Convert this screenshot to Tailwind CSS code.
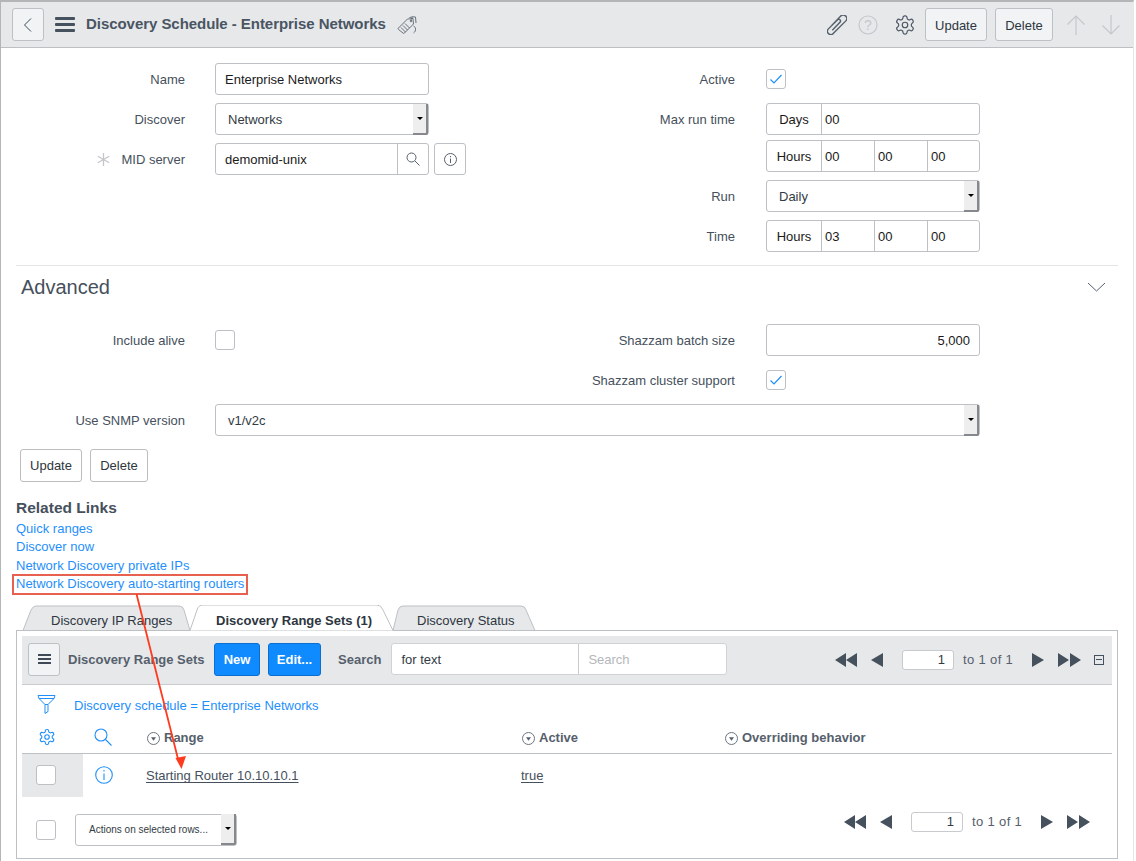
<!DOCTYPE html>
<html>
<head>
<meta charset="utf-8">
<script src="https://cdn.jsdelivr.net/npm/@tailwindcss/browser@4"></script>
</head>
<body class="bg-white">
<div class="relative w-[1136px] h-[861px] overflow-hidden bg-white font-['Liberation_Sans',Arial,sans-serif] text-[13px] text-[#333b44]">
<div class="w-[1134px] h-[861px] border-t-2 border-l border-r border-t-[#b4b5b7] border-l-[#b4b5b7] border-r-[#e6e6e6]">

<!-- header -->
<header class="h-[46px] bg-[#e6e8ea] border-b border-[#bdbfc2] flex items-center pl-[11px] pr-[12px]">
  <button class="w-[32px] h-[33px] rounded-[3px] border border-[#bdc0c4] bg-[#f1f3f5] flex items-center justify-center">
    <svg width="10" height="16" viewBox="0 0 10 16" fill="none" stroke="#3f4a56" stroke-width="1"><path d="M8 1.500 1.500 8 8 14.500"/></svg>
  </button>
  <div class="ml-[11px] w-[20px] flex flex-col gap-[3px]"><span class="block h-[3px] bg-[#46515e] rounded-[1px]"></span><span class="block h-[3px] bg-[#46515e] rounded-[1px]"></span><span class="block h-[3px] bg-[#46515e] rounded-[1px]"></span></div>
  <h1 class="ml-[11px] text-[15px] font-bold text-[#4a5563] whitespace-nowrap tracking-[-0.05px]">Discovery Schedule - Enterprise Networks</h1>
  <svg class="ml-[11px] mt-[3px]" width="20" height="20" viewBox="0 0 20 20" fill="none" stroke="#5a6470" stroke-width="0.900"><path d="M1.500 12 10.500 3l5.500-.5.500 5.500-9 9a1 1 0 0 1-1.500 0L1.500 13.500a1 1 0 0 1 0-1.500Z"/><path d="M4 11.500l4.500 4.500M6 9.500l4.500 4.500M8 7.500l4.500 4.500"/><path d="M12.500 1.500 16 .8l2.500.2.500 6"/><circle cx="14" cy="5" r=".8"/><path d="M14 5c0-2 1-4 1.500-4M16.500 10c2.500 1 3 5 0 7"/></svg>
  <div class="ml-auto flex items-center">
    <svg width="20" height="20" viewBox="2 2 17 17" fill="none" stroke="#56606c" stroke-width="1.200"><path d="M6 11 13.500 3a3 3 0 0 1 4.500 4L7.500 17.500a2.700 2.700 0 0 1-4.500-3.500L11 6a1.500 1.500 0 0 1 2.200 2L6.500 15"/></svg>
    <svg class="ml-[11px]" width="20" height="20" viewBox="0 0 20 20" fill="none" stroke="#c4c8cd" stroke-width="1.200"><circle cx="10" cy="10" r="9"/><text x="10" y="15" text-anchor="middle" font-size="14" fill="#c4c8cd" stroke="none" font-family="Liberation Sans">?</text></svg>
    <svg class="ml-[16px]" width="22" height="22" viewBox="0 0 24 24" fill="none" stroke="#4a5563" stroke-width="1.300"><path d="M12.220 2h-.44a2 2 0 0 0-2 2v.18a2 2 0 0 1-1 1.730l-.43.25a2 2 0 0 1-2 0l-.15-.08a2 2 0 0 0-2.730.73l-.22.38a2 2 0 0 0 .73 2.730l.15.1a2 2 0 0 1 1 1.720v.51a2 2 0 0 1-1 1.740l-.15.09a2 2 0 0 0-.73 2.730l.22.38a2 2 0 0 0 2.730.73l.15-.08a2 2 0 0 1 2 0l.43.25a2 2 0 0 1 1 1.730V20a2 2 0 0 0 2 2h.44a2 2 0 0 0 2-2v-.18a2 2 0 0 1 1-1.730l.43-.25a2 2 0 0 1 2 0l.15.08a2 2 0 0 0 2.730-.73l.22-.39a2 2 0 0 0-.73-2.730l-.15-.08a2 2 0 0 1-1-1.740v-.5a2 2 0 0 1 1-1.740l.15-.09a2 2 0 0 0 .73-2.730l-.22-.38a2 2 0 0 0-2.730-.73l-.15.08a2 2 0 0 1-2 0l-.43-.25a2 2 0 0 1-1-1.730V4a2 2 0 0 0-2-2z"/><circle cx="12" cy="12" r="3"/></svg>
    <button class="ml-[9px] w-[62px] h-[33px] rounded-[3px] border border-[#bdc0c4] bg-[#f1f3f5] text-[#2e3640] text-[13px] pt-[2px]">Update</button>
    <button class="ml-[8px] w-[58px] h-[33px] rounded-[3px] border border-[#bdc0c4] bg-[#f1f3f5] text-[#2e3640] text-[13px] pt-[2px]">Delete</button>
    <svg class="ml-[13px]" width="20" height="22" viewBox="0 0 20 22" fill="none" stroke="#c4c8cd" stroke-width="1.200"><path d="M10 21V2M1.500 10.500 10 2l8.500 8.500"/></svg>
    <svg class="ml-[15px]" width="20" height="22" viewBox="0 0 20 22" fill="none" stroke="#c4c8cd" stroke-width="1.200"><path d="M10 1v19M1.500 11.500 10 20l8.500-8.500"/></svg>
  </div>
</header>

<!-- form -->
<section class="flex pt-[15px] h-[217px]">
  <div class="w-[466px] flex flex-col gap-[8px]">
    <div class="flex items-center h-[32px]"><label class="w-[184px] text-right pt-[2px] text-[#46505c]">Name</label><div class="ml-[30px] w-[214px] h-[32px] border border-[#bdc0c4] rounded-[3px] flex items-center pl-[9px] pt-[2px] text-[#1a1a1a]">Enterprise Networks</div></div>
    <div class="flex items-center h-[32px]"><label class="w-[184px] text-right pt-[2px] text-[#46505c]">Discover</label>
      <div class="ml-[30px] w-[214px] h-[32px] border border-[#bdc0c4] rounded-[3px] flex items-center pl-[12px] text-[#333b44]"><span class="pt-[2px]">Networks</span>
        <span class="ml-auto w-[15px] h-[31px] bg-[#eeeeee] border-r-2 border-b-2 border-[#85888c] rounded-br-[2px] flex items-center justify-center"><span class="block w-0 h-0 border-x-[3px] border-x-transparent border-t-[3px] border-t-black"></span></span>
      </div></div>
    <div class="flex items-center h-[32px]"><label class="w-[184px] flex justify-end items-center text-[#46505c]"><svg class="mr-[11px]" width="13" height="13" viewBox="0 0 13 13" fill="none" stroke="#c4c6c9" stroke-width="1.300"><path d="M6.500 0v13M.8 3.200l11.400 6.600M12.200 3.200.8 9.800"/></svg><span class="pt-[2px]">MID server</span></label>
      <div class="ml-[30px] w-[214px] h-[32px] border border-[#bdc0c4] rounded-[3px] flex items-center pl-[9px] text-[#1a1a1a]"><span class="pt-[2px]">demomid-unix</span>
        <span class="ml-auto w-[31px] h-[30px] border-l border-[#bdc0c4] flex items-center justify-center"><svg width="14" height="14" viewBox="0 0 14 14" fill="none" stroke="#56606c"><circle cx="5.500" cy="5.500" r="4.500"/><path d="m9 9 4.500 4.500"/></svg></span>
      </div>
      <div class="ml-[5px] w-[32px] h-[32px] border border-[#bdc0c4] rounded-[3px] flex items-center justify-center"><svg width="13" height="13" viewBox="0 0 13 13" fill="none" stroke="#56606c"><circle cx="6.500" cy="6.500" r="6"/><path d="M6.500 5.500V10M6.500 3v1.200"/></svg></div>
    </div>
  </div>
  <div class="w-[514px] flex flex-col">
    <div class="flex items-center h-[32px]"><label class="w-[268px] text-right pt-[2px] text-[#46505c]">Active</label><div class="ml-[31px] w-[20px] h-[20px] border border-[#bdc0c4] rounded-[3px] flex items-center justify-center"><svg width="14" height="12" viewBox="0 0 14 12" fill="none" stroke="#1f8ffb" stroke-width="1.200"><path d="m1.500 6.500 3.500 3.500 7.500-8"/></svg></div></div>
    <div class="mt-[8px] flex items-center h-[32px]"><label class="w-[268px] text-right pt-[2px] text-[#46505c]">Max run time</label><div class="ml-[31px] w-[214px] h-[32px] border border-[#bdc0c4] rounded-[3px] flex items-center text-[#1a1a1a]"><span class="w-[55px] h-full flex items-center justify-center pt-[2px] border-r border-[#bdc0c4]">Days</span><span class="pl-[3px] pt-[2px]">00</span></div></div>
    <div class="mt-[5px] flex items-center h-[32px] pl-[299px]"><div class="w-[214px] h-[32px] border border-[#bdc0c4] rounded-[3px] flex items-center text-[#1a1a1a]"><span class="w-[55px] h-full flex items-center justify-center pt-[2px] border-r border-[#bdc0c4]">Hours</span><span class="w-[53px] h-full flex items-center pl-[3px] pt-[2px] border-r border-[#bdc0c4]">00</span><span class="w-[53px] h-full flex items-center pl-[3px] pt-[2px] border-r border-[#bdc0c4]">00</span><span class="pl-[3px] pt-[2px]">00</span></div></div>
    <div class="mt-[8px] flex items-center h-[32px]"><label class="w-[268px] text-right pt-[2px] text-[#46505c]">Run</label>
      <div class="ml-[31px] w-[214px] h-[32px] border border-[#bdc0c4] rounded-[3px] flex items-center pl-[12px] text-[#333b44]"><span class="pt-[2px]">Daily</span><span class="ml-auto w-[15px] h-[31px] bg-[#eeeeee] border-r-2 border-b-2 border-[#85888c] rounded-br-[2px] flex items-center justify-center"><span class="block w-0 h-0 border-x-[3px] border-x-transparent border-t-[3px] border-t-black"></span></span></div></div>
    <div class="mt-[8px] flex items-center h-[32px]"><label class="w-[268px] text-right pt-[2px] text-[#46505c]">Time</label><div class="ml-[31px] w-[214px] h-[32px] border border-[#bdc0c4] rounded-[3px] flex items-center text-[#1a1a1a]"><span class="w-[55px] h-full flex items-center justify-center pt-[2px] border-r border-[#bdc0c4]">Hours</span><span class="w-[53px] h-full flex items-center pl-[3px] pt-[2px] border-r border-[#bdc0c4]">03</span><span class="w-[53px] h-full flex items-center pl-[3px] pt-[2px] border-r border-[#bdc0c4]">00</span><span class="pl-[3px] pt-[2px]">00</span></div></div>
  </div>
</section>

<!-- advanced -->
<div class="ml-[15px] w-[1102px] border-t border-[#e4e5e7] h-[59px] flex items-start justify-between pl-[5px] pr-[12px]">
  <h2 class="text-[20px] text-[#46505c] leading-none mt-[11px]">Advanced</h2>
  <svg class="mt-[16px]" width="19" height="10" viewBox="0 0 19 10" fill="none" stroke="#56606c"><path d="m1 1 8.500 8L18 1"/></svg>
</div>

<section class="flex h-[80px]">
  <div class="w-[466px] pt-[5px]"><div class="flex items-center h-[22px]"><label class="w-[184px] text-right pt-[2px] text-[#46505c]">Include alive</label><div class="ml-[30px] w-[20px] h-[20px] border border-[#bdc0c4] rounded-[3px]"></div></div></div>
  <div class="w-[514px] flex flex-col">
    <div class="flex items-center h-[32px]"><label class="w-[268px] text-right pt-[2px] text-[#46505c]">Shazzam batch size</label><div class="ml-[31px] w-[214px] h-[32px] border border-[#bdc0c4] rounded-[3px] flex items-center justify-end pr-[9px] pt-[2px] text-[#1a1a1a]">5,000</div></div>
    <div class="mt-[14px] flex items-center h-[20px]"><label class="w-[268px] text-right pt-[2px] text-[#46505c]">Shazzam cluster support</label><div class="ml-[31px] w-[20px] h-[20px] border border-[#bdc0c4] rounded-[3px] flex items-center justify-center"><svg width="14" height="12" viewBox="0 0 14 12" fill="none" stroke="#1f8ffb" stroke-width="1.200"><path d="m1.500 6.500 3.500 3.500 7.500-8"/></svg></div></div>
  </div>
</section>
<div class="flex items-center h-[32px]"><label class="w-[184px] text-right pt-[2px] text-[#46505c]">Use SNMP version</label>
  <div class="ml-[30px] w-[765px] h-[32px] border border-[#bdc0c4] rounded-[3px] flex items-center pl-[12px] text-[#333b44]"><span class="pt-[2px]">v1/v2c</span><span class="ml-auto w-[15px] h-[31px] bg-[#eeeeee] border-r-2 border-b-2 border-[#85888c] rounded-br-[2px] flex items-center justify-center"><span class="block w-0 h-0 border-x-[3px] border-x-transparent border-t-[3px] border-t-black"></span></span></div></div>

<div class="flex gap-[8px] mt-[13px] ml-[19px]">
  <button class="w-[62px] h-[33px] rounded-[3px] border border-[#bdbdbd] bg-white text-[#2e3640] text-[13px] pt-[1px]">Update</button>
  <button class="w-[58px] h-[33px] rounded-[3px] border border-[#bdbdbd] bg-white text-[#2e3640] text-[13px] pt-[1px]">Delete</button>
</div>

<!-- related links -->
<div class="ml-[15px] mt-[16px]">
  <div class="text-[15.500px] font-bold text-[#46505c] leading-[20px]">Related Links</div>
  <ul class="mt-[2px] text-[#1f8ffb] leading-[18.400px]">
    <li>Quick ranges</li><li>Discover now</li><li>Network Discovery private IPs</li><li>Network Discovery auto-starting routers</li>
  </ul>
</div>

<!-- tabs -->
<div class="relative ml-[15px] mt-[11px] w-[1102px] h-[25px]">
  <svg class="absolute left-0 top-0" width="530" height="26" viewBox="0 0 530 26"><path d="M7 25.500 15 5Q17 1 20 1H163Q167 1 168 5L174 25.500Z" fill="#e6e8ea" stroke="#bdc0c4"/><path d="M377 25.500 382 5Q383.500 1 387 1H505Q509 1 510 5L519 25.500Z" fill="#e6e8ea" stroke="#bdc0c4"/><path d="M174 25.500 181 5Q182.500 0 187 0H361Q365 0 367 5L377 25.500" fill="#fff" stroke="#bdc0c4"/></svg>
  <div class="relative flex h-full items-center pt-[8px]">
    <span class="ml-[35px] w-[165px] text-[#2e3640]">Discovery IP Ranges</span>
    <span class="w-[201px] font-bold text-[#2e3640]">Discovery Range Sets (1)</span>
    <span class="text-[#2e3640]">Discovery Status</span>
  </div>
</div>

<!-- panel -->
<div class="ml-[15px] w-[1102px] h-[229px] border border-[#bdc0c4] pt-[5px] px-[5px]">
  <div class="h-[49px] bg-[#e6e8ea] border-b border-[#c8cacd] flex items-center pl-[6px] pb-[1px]">
    <button class="w-[32px] h-[33px] rounded-[3px] border border-[#bdc0c4] bg-[#f1f3f5] flex items-center justify-center"><span class="w-[13px] flex flex-col gap-[2px]"><span class="block h-[2px] bg-[#3f4a56]"></span><span class="block h-[2px] bg-[#3f4a56]"></span><span class="block h-[2px] bg-[#3f4a56]"></span></span></button>
    <span class="ml-[8px] w-[146px] text-[13px] font-bold text-[#56606c] whitespace-nowrap pt-[1px]">Discovery Range Sets</span>
    <button class="w-[46px] h-[33px] rounded-[3px] border border-[#0a6fd0] bg-[#0f8bff] text-white font-bold text-[13px] pt-[1px]">New</button>
    <button class="ml-[8px] w-[53px] h-[33px] rounded-[3px] border border-[#0a6fd0] bg-[#0f8bff] text-white font-bold text-[13px] pt-[1px]">Edit...</button>
    <span class="ml-[17px] font-bold text-[#56606c] pt-[2px]">Search</span>
    <div class="ml-[10px] w-[336px] h-[32px] bg-white border border-[#d0d2d5] rounded-[3px] flex items-center">
      <span class="w-[187px] h-full flex items-center pl-[9px] pt-[1px] border-r border-[#c8cacd] text-[#333b44]">for text</span><span class="pl-[9px] pt-[1px] text-[#b4b7bb]">Search</span>
    </div>
    <div class="ml-auto flex items-center pr-[8px] pt-[1px]">
      <svg width="22" height="14" viewBox="0 0 22 14" fill="#46515e"><path d="M11 0v14L0 7ZM22 0v14L11 7Z"/></svg>
      <svg class="ml-[14px]" width="12" height="14" viewBox="0 0 12 14" fill="#46515e"><path d="M12 0v14L0 7Z"/></svg>
      <div class="ml-[19px] w-[52px] h-[20px] bg-white border border-[#c8cacd] rounded-[3px] flex items-center justify-end pr-[8px] pt-[1px] text-[#333b44]">1</div>
      <span class="ml-[9px] w-[50px] text-[#56606c] whitespace-nowrap tracking-[0.35px]">to 1 of 1</span>
      <svg class="ml-[19px]" width="12" height="14" viewBox="0 0 12 14" fill="#46515e"><path d="M0 0v14L12 7Z"/></svg>
      <svg class="ml-[14px]" width="23" height="14" viewBox="0 0 23 14" fill="#46515e"><path d="M0 0v14L11 7ZM12 0v14L23 7Z"/></svg>
      <span class="ml-[13px] w-[10px] h-[10px] border border-[#46515e] flex items-center justify-center"><span class="block w-[6px] h-px bg-[#46515e]"></span></span>
    </div>
  </div>

  <div class="h-[39px] flex items-center pl-[15px] text-[#1f8ffb]">
    <svg width="20" height="21" viewBox="0 0 20 21" fill="none" stroke="#1f8ffb"><path d="M1 1.500h17l-1 3H2ZM2 4.500l6 6h3l6-6M8 10.500V19.500l3-2v-7"/></svg>
    <span class="ml-[17px] pt-[4px]">Discovery schedule = Enterprise Networks</span>
  </div>

  <div class="h-[30px] grid grid-cols-[61px_63px_375px_203px_1fr] border-b border-[#bdc0c4] items-center text-[#56606c] font-bold">
    <div class="pl-[16px] pb-[2px]"><svg width="18" height="18" viewBox="0 0 24 24" fill="none" stroke="#1f8ffb" stroke-width="1.500"><path d="M12.220 2h-.44a2 2 0 0 0-2 2v.18a2 2 0 0 1-1 1.730l-.43.25a2 2 0 0 1-2 0l-.15-.08a2 2 0 0 0-2.730.73l-.22.38a2 2 0 0 0 .73 2.730l.15.1a2 2 0 0 1 1 1.720v.51a2 2 0 0 1-1 1.740l-.15.09a2 2 0 0 0-.73 2.730l.22.38a2 2 0 0 0 2.730.73l.15-.08a2 2 0 0 1 2 0l.43.25a2 2 0 0 1 1 1.730V20a2 2 0 0 0 2 2h.44a2 2 0 0 0 2-2v-.18a2 2 0 0 1 1-1.730l.43-.25a2 2 0 0 1 2 0l.15.08a2 2 0 0 0 2.730-.73l.22-.39a2 2 0 0 0-.73-2.730l-.15-.08a2 2 0 0 1-1-1.740v-.5a2 2 0 0 1 1-1.740l.15-.09a2 2 0 0 0 .73-2.730l-.22-.38a2 2 0 0 0-2.730-.73l-.15.08a2 2 0 0 1-2 0l-.43-.25a2 2 0 0 1-1-1.730V4a2 2 0 0 0-2-2z"/><circle cx="12" cy="12" r="3"/></svg></div>
    <div class="pl-[11px] pb-[2px]"><svg width="18" height="18" viewBox="0 0 18 18" fill="none" stroke="#1f8ffb" stroke-width="1.100"><circle cx="7" cy="7" r="6"/><path d="m11.500 11.500 6 6"/></svg></div>
    <div class="flex items-center pl-[1px]"><svg width="13" height="13" viewBox="0 0 13 13"><circle cx="6.500" cy="6.500" r="6" fill="none" stroke="#6b7480"/><path d="M4 5.200h5L6.500 8.800Z" fill="#56606c"/></svg><span class="ml-[4px]">Range</span></div>
    <div class="flex items-center pl-[1px]"><svg width="13" height="13" viewBox="0 0 13 13"><circle cx="6.500" cy="6.500" r="6" fill="none" stroke="#6b7480"/><path d="M4 5.200h5L6.500 8.800Z" fill="#56606c"/></svg><span class="ml-[4px]">Active</span></div>
    <div class="flex items-center pl-[1px]"><svg width="13" height="13" viewBox="0 0 13 13"><circle cx="6.500" cy="6.500" r="6" fill="none" stroke="#6b7480"/><path d="M4 5.200h5L6.500 8.800Z" fill="#56606c"/></svg><span class="ml-[4px]">Overriding behavior</span></div>
  </div>

  <div class="h-[43px] grid grid-cols-[61px_63px_375px_203px_1fr] items-center text-[#46505c]">
    <div class="h-full bg-[#e6e8ea] flex items-center pl-[14px]"><span class="block w-[20px] h-[20px] bg-white border border-[#bdc0c4] rounded-[3px]"></span></div>
    <div class="pl-[12px]"><svg width="18" height="18" viewBox="0 0 18 18" fill="none" stroke="#1f8ffb" stroke-width="1.100"><circle cx="9" cy="9" r="8.300"/><path d="M9 7.500V14M9 4v1.500"/></svg></div>
    <div class="pt-[2px]"><span class="underline underline-offset-2">Starting Router 10.10.10.1</span></div>
    <div class="pt-[2px]"><span class="underline underline-offset-2">true</span></div>
    <div></div>
  </div>

  <div class="mt-[17px] h-[32px] flex items-center pl-[14px]">
    <span class="block w-[20px] h-[20px] bg-white border border-[#bdc0c4] rounded-[3px]"></span>
    <div class="ml-[19px] w-[162px] h-[32px] border border-[#bdc0c4] rounded-[3px] flex items-center pl-[13px] text-[10px] text-[#333b44]"><span>Actions on selected rows...</span><span class="ml-auto w-[15px] h-[31px] bg-[#eeeeee] border-r-2 border-b-2 border-[#85888c] rounded-br-[2px] flex items-center justify-center"><span class="block w-0 h-0 border-x-[3px] border-x-transparent border-t-[3px] border-t-black"></span></span></div>
    <div class="ml-auto flex items-center pr-[22px] -mt-[16px]">
      <svg width="22" height="14" viewBox="0 0 22 14" fill="#46515e"><path d="M11 0v14L0 7ZM22 0v14L11 7Z"/></svg>
      <svg class="ml-[14px]" width="12" height="14" viewBox="0 0 12 14" fill="#46515e"><path d="M12 0v14L0 7Z"/></svg>
      <div class="ml-[19px] w-[52px] h-[20px] bg-white border border-[#c8cacd] rounded-[3px] flex items-center justify-end pr-[8px] text-[#333b44]">1</div>
      <span class="ml-[9px] w-[50px] text-[#56606c] whitespace-nowrap tracking-[0.35px]">to 1 of 1</span>
      <svg class="ml-[19px]" width="12" height="14" viewBox="0 0 12 14" fill="#46515e"><path d="M0 0v14L12 7Z"/></svg>
      <svg class="ml-[14px]" width="23" height="14" viewBox="0 0 23 14" fill="#46515e"><path d="M0 0v14L11 7ZM12 0v14L23 7Z"/></svg>
    </div>
  </div>
</div>
</div>

<!-- annotations over the screenshot -->
<div class="absolute left-[12px] top-[574px] w-[236px] h-[21px] border-2 border-[#e8604f]"></div>
<svg class="absolute left-0 top-0 pointer-events-none" width="1136" height="861" viewBox="0 0 1136 861"><path d="M136.500 594 178 759" stroke="#ff3b1f" stroke-width="1.800" fill="none"/><path d="M181.500 769 175.500 758 186 756Z" fill="#ff3b1f"/></svg>
</div>
</body>
</html>
